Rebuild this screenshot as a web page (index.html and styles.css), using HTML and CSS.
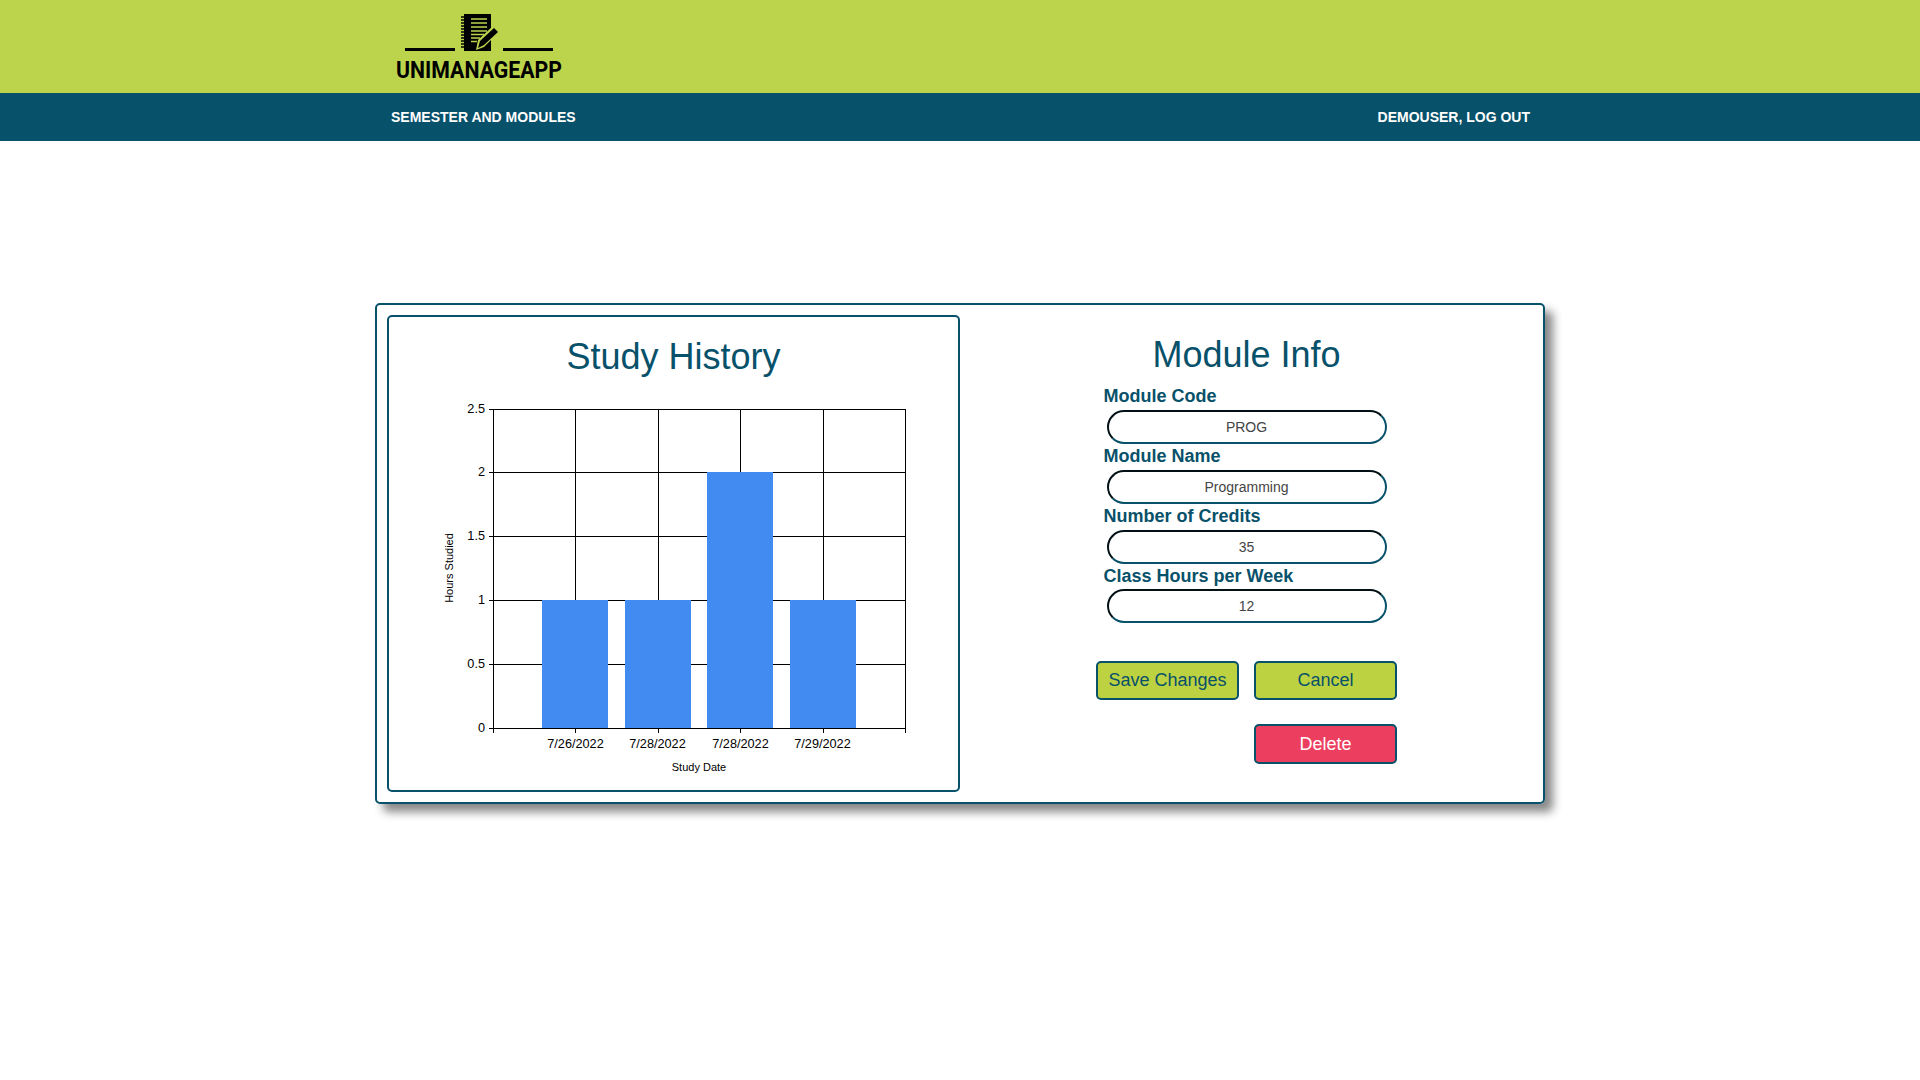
FILE: index.html
```html
<!DOCTYPE html>
<html lang="en">
<head>
    <meta charset="UTF-8">
    <meta name="viewport" content="width=device-width, initial-scale=1.0">
    <title>UniManageApp</title>
    <link rel="stylesheet" href="styles.css">
</head>
<body>
    <header class="brand-bar">
        <div class="container">
            <svg class="logo" width="200" height="93" viewBox="390 0 200 93">
                <rect x="405" y="48" width="50" height="3"/>
                <rect x="503" y="48" width="50" height="3"/>
                <rect x="464" y="14" width="27" height="37"/>
                <path class="spiral" d="M461 17h4M461 20h4M461 23h4M461 26h4M461 29h4M461 32h4M461 35h4M461 38h4M461 41h4M461 44h4M461 47h4"/>
                <path class="page-lines" d="M471 19h16M471 23h16M471 27h16M471 31h16M471 34.500h13M471 38h9M471 41.500h6"/>
                <path class="pen-edge" d="M476 50l2-10 16-15 6 6-16 16z"/>
                <path d="M478 48l2-7 14-13 4 4-14 13z"/>
                <text class="logo-text" x="396" y="78" textLength="166" lengthAdjust="spacingAndGlyphs">UNIMANAGEAPP</text>
            </svg>
        </div>
    </header>

    <nav class="nav-bar">
        <div class="container nav-inner">
            <a href="#">Semester and Modules</a>
            <a href="#">DemoUser, Log Out</a>
        </div>
    </nav>

    <main class="container page">
        <section class="card">
            <div class="chart-panel">
                <h2 class="chart-title">Study History</h2>
                <svg class="chart" width="569" height="401" viewBox="389 389 569 401">
                    <g class="grid">
                        <path d="M493.5 409.500H905.500M493.500 472.500H905.500M493.500 536.500H905.500M493.500 600.500H905.500M493.500 664.500H905.500M489 409.500H494M489 472.500H494M489 536.500H494M489 600.500H494M489 664.500H494M489 728.500H905.500"/>
                        <path d="M493.500 409V733M575.500 409V733M658.500 409V733M740.500 409V733M823.500 409V733M905.500 409V733"/>
                    </g>
                    <g class="bars">
                        <rect x="542" y="600" width="66" height="128"/>
                        <rect x="625" y="600" width="66" height="128"/>
                        <rect x="707" y="472" width="66" height="256"/>
                        <rect x="790" y="600" width="66" height="128"/>
                    </g>
                    <g class="y-labels">
                        <text x="485" y="413">2.5</text>
                        <text x="485" y="476">2</text>
                        <text x="485" y="540">1.5</text>
                        <text x="485" y="604">1</text>
                        <text x="485" y="668">0.5</text>
                        <text x="485" y="732">0</text>
                    </g>
                    <g class="x-labels">
                        <text x="575.500" y="748">7/26/2022</text>
                        <text x="657.500" y="748">7/28/2022</text>
                        <text x="740.500" y="748">7/28/2022</text>
                        <text x="822.500" y="748">7/29/2022</text>
                    </g>
                    <text class="axis-title" x="699" y="771">Study Date</text>
                    <text class="axis-title" transform="translate(453 568) rotate(-90)">Hours Studied</text>
                </svg>
            </div>

            <div class="module-info">
                <h2 class="info-title">Module Info</h2>
                <form class="module-form">
                    <label for="code">Module Code</label>
                    <input id="code" type="text" value="PROG">
                    <label for="name">Module Name</label>
                    <input id="name" type="text" value="Programming">
                    <label for="credits">Number of Credits</label>
                    <input id="credits" type="text" value="35">
                    <label class="last-label" for="hours">Class Hours per Week</label>
                    <input id="hours" type="text" value="12">
                </form>
                <div class="actions">
                    <button type="button">Save Changes</button>
                    <button type="button">Cancel</button>
                    <button type="button" class="delete">Delete</button>
                </div>
            </div>
        </section>
    </main>
</body>
</html>
```

FILE: styles.css
```css
*{
    box-sizing: border-box;
}
body{
    margin: 0;
    font-family: "Liberation Sans", Arial, sans-serif;
    background-color: #fff;
    color: #08516a;
}
.container{
    width: 1170px;
    margin: 0 auto;
}
.page{
    padding-bottom: 40px;
}
/* header */
.brand-bar{
    height: 93px;
    background-color: #bcd44c;
}
.logo{
    display: block;
    margin-left: 15px;
    fill: #000;
}
.logo-text{
    font-family: "Roboto", sans-serif;
    font-weight: 700;
    font-size: 24px;
}
.spiral{
    fill: none;
    stroke: #000;
    stroke-width: 1.5;
}
.page-lines{
    fill: none;
    stroke: #bcd44c;
    stroke-width: 1.6;
}
.pen-edge{
    fill: #bcd44c;
}
.nav-bar{
    height: 48px;
    background-color: #08516a;
}
.nav-inner{
    display: flex;
    justify-content: space-between;
    align-items: center;
    height: 100%;
    padding: 0 15px 0 16px;
}
.nav-inner a{
    color: #fff;
    font-size: 14px;
    font-weight: bold;
    text-transform: uppercase;
    text-decoration: none;
}
/* main card */
.card{
    display: grid;
    grid-template-columns: 573px 573px;
    margin-top: 162px;
    padding: 10px;
    border: 2px solid #08516a;
    border-radius: 5px;
    box-shadow: 8px 8px 10px #888;
}
.chart-panel{
    border: 2px solid #08516a;
    border-radius: 5px;
}
.chart-title,
.info-title{
    margin: 0;
    font-size: 36px;
    font-weight: normal;
    text-align: center;
}
.chart-title{
    height: 72px;
    padding: 19px 0 0 0;
    line-height: 41px;
}
.chart{
    display: block;
}
.grid path{
    fill: none;
    stroke: #000;
    stroke-width: 1;
}
.bars rect{
    fill: #428bf0;
}
.chart text{
    font-size: 12.7px;
    fill: #000;
}
.y-labels text{
    text-anchor: end;
}
.x-labels text{
    text-anchor: middle;
}
.chart .axis-title{
    font-size: 11px;
    text-anchor: middle;
}
/* module form */
.info-title{
    padding-top: 19px;
    line-height: 41px;
}
.module-form{
    display: flex;
    flex-direction: column;
    width: 286px;
    margin: 9px auto 0;
}
.module-form label{
    height: 26px;
    line-height: 25px;
    font-size: 18px;
    font-weight: bold;
}
.module-form .last-label{
    height: 25px;
}
.module-form input{
    width: 280px;
    height: 34px;
    margin: 0 0 0 3px;
    padding: 0;
    border: 2px inset #08516a;
    border-radius: 17px;
    font-family: "Liberation Sans", Arial, sans-serif;
    font-size: 14px;
    text-align: center;
    color: #444;
    background-color: #fff;
}
.actions{
    display: grid;
    grid-template-columns: 143px 143px;
    gap: 24px 15px;
    justify-content: center;
    margin-top: 38px;
}
.actions button{
    height: 39px;
    border: 2px solid #08516a;
    border-radius: 5px;
    background-color: #bcd240;
    color: #08516a;
    font-family: "Liberation Sans", Arial, sans-serif;
    font-size: 18px;
}
.actions .delete{
    grid-column: 2;
    height: 40px;
    background-color: #ec3f5f;
    color: #fff;
}
```
